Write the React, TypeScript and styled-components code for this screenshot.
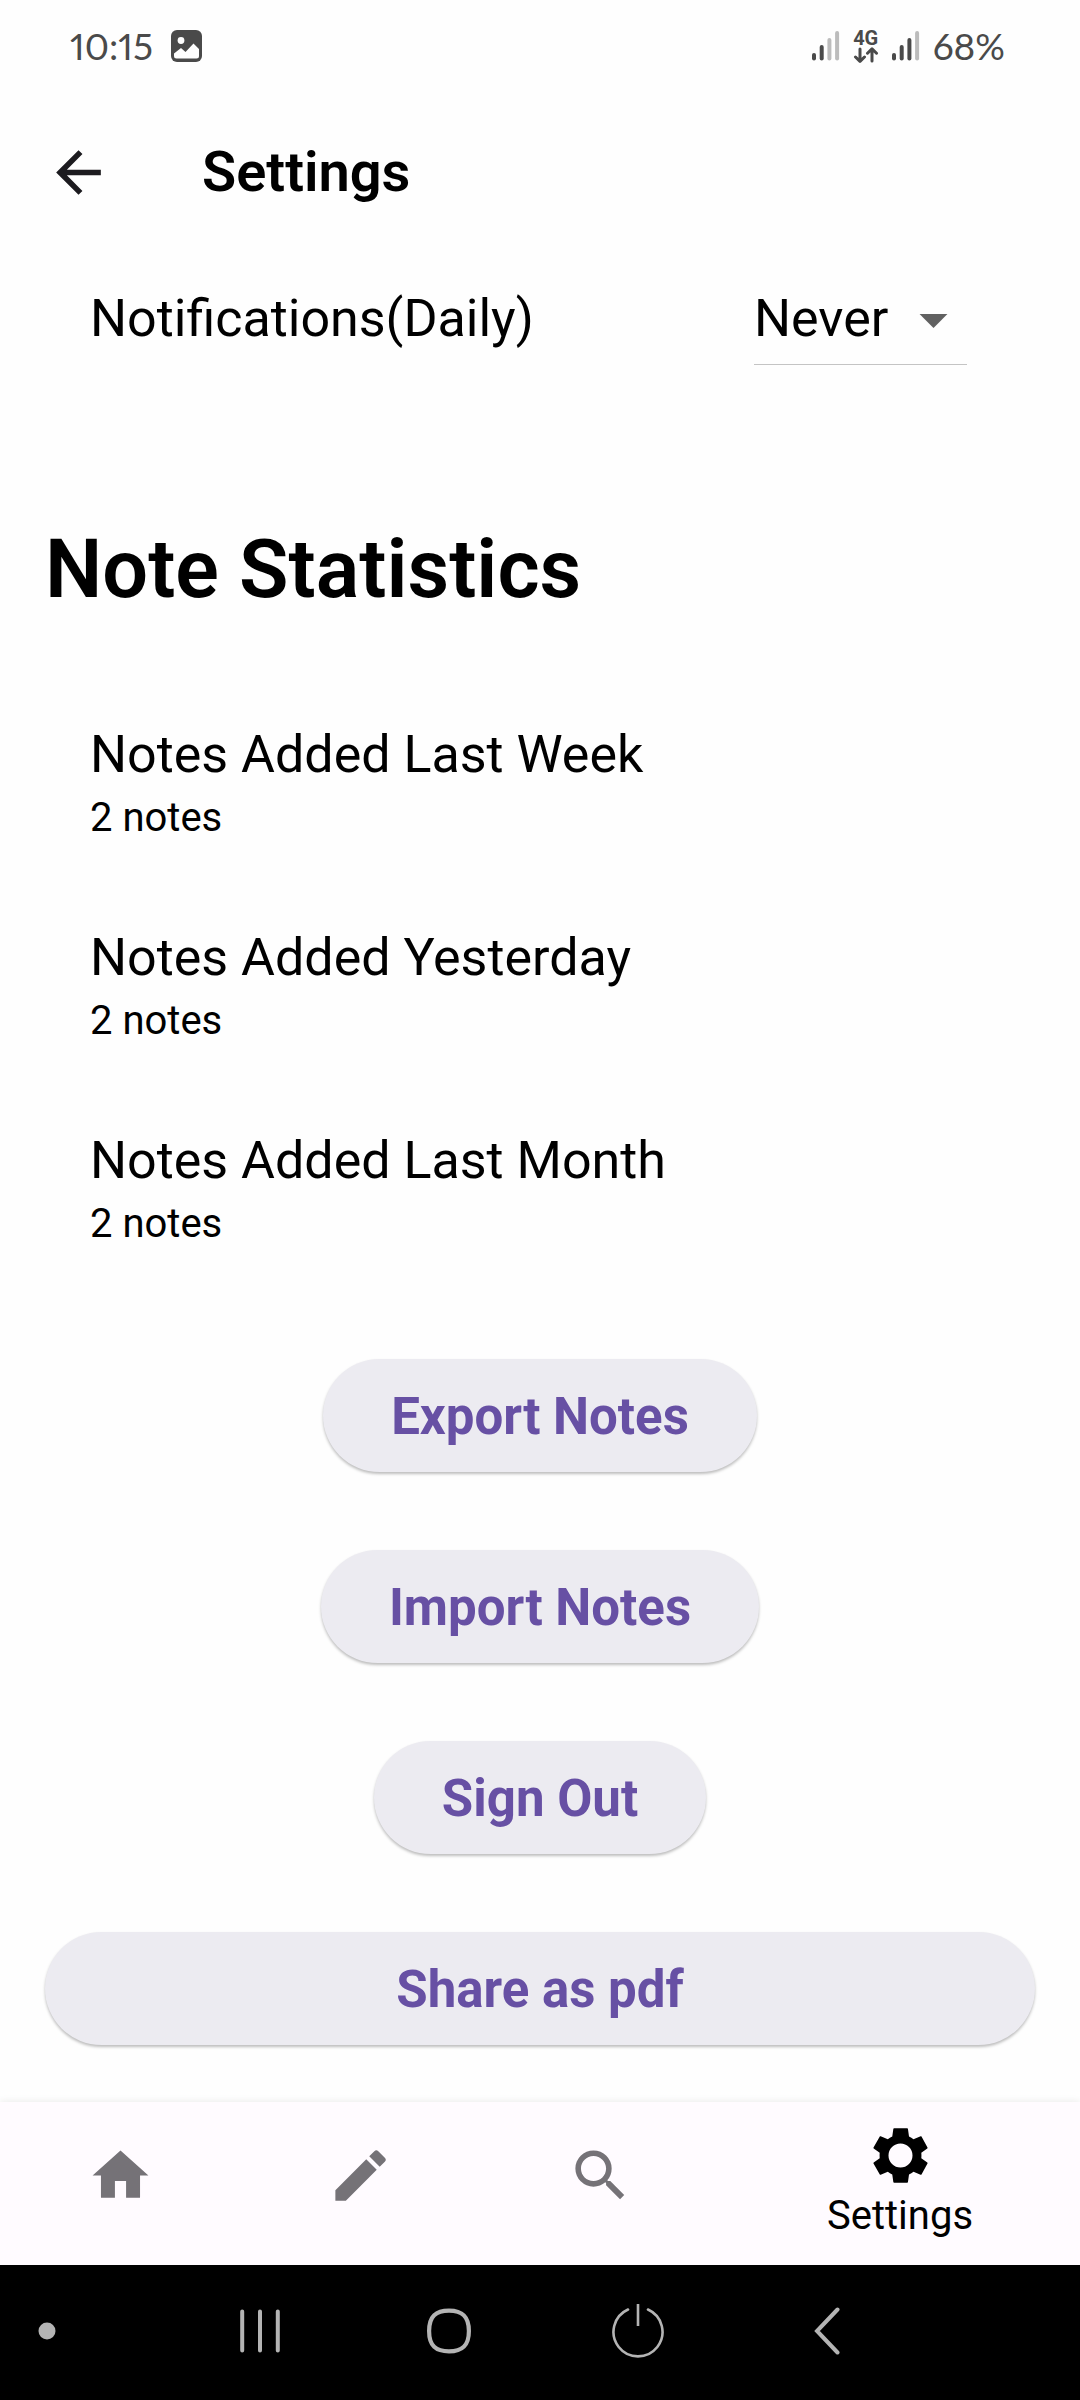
import React from "react";
import styled, { createGlobalStyle } from "styled-components";

const GlobalStyle = createGlobalStyle`
  *, *::before, *::after { box-sizing: border-box; }
  body {
    margin: 0;
    background: #fefefe;
    color: #000;
    font-family: Roboto, "Noto Sans", sans-serif;
  }
`;

const Screen = styled.div`
  min-height: 100vh;
  display: flex;
  flex-direction: column;
`;

const StatusBar = styled.div`
  height: 93px;
  padding: 0 75px 2px 70px;
  display: flex;
  align-items: center;
  justify-content: space-between;
  color: #4a4a4a;
  font-family: Lato, Roboto, sans-serif;
  font-size: 37px;
  font-variant-numeric: proportional-nums;
  line-height: 44px;
`;

const StatusGroup = styled.div<{ $gap: number }>`
  display: flex;
  align-items: center;
  gap: ${(p) => p.$gap}px;
`;

const Network = styled.div`
  display: flex;
  flex-direction: column;
  align-items: center;
  font-family: Roboto, sans-serif;
  font-size: 20px;
  font-weight: 700;
  line-height: 18px;
`;

const AppBar = styled.header`
  height: 158px;
  padding: 0 45px;
  display: flex;
  align-items: center;
  gap: 90px;
`;

const IconButton = styled.button`
  display: flex;
  padding: 0;
  border: 0;
  background: none;
  color: #1c1b1f;
`;

const Title = styled.h1`
  margin: 0;
  font-size: 56px;
  font-weight: 600;
  line-height: 66px;
`;

const Main = styled.main`
  flex: 1;
  padding: 0 45px 55px;
`;

const SettingRow = styled.div`
  height: 136px;
  padding: 0 68px 0 45px;
  display: flex;
  align-items: center;
  justify-content: space-between;
`;

const RowLabel = styled.label`
  font-size: 52px;
  line-height: 66px;
`;

const SelectBox = styled.div`
  position: relative;
  display: flex;
  border-bottom: 1px solid #c4c4c4;
`;

const Select = styled.select`
  appearance: none;
  height: 90px;
  padding: 0 78px 0 0;
  border: 0;
  background: none;
  color: #000;
  font-family: inherit;
  font-size: 52px;
  line-height: 66px;
`;

const SelectArrow = styled.svg`
  position: absolute;
  right: 0;
  top: 12px;
  color: #616161;
  pointer-events: none;
`;

const SectionTitle = styled.h2`
  margin: 136px 0 66px;
  font-size: 81px;
  font-weight: 600;
  line-height: 94px;
`;

const StatList = styled.dl`
  margin: 0;
`;

const Stat = styled.div`
  height: 203px;
  padding: 0 45px;
  display: flex;
  flex-direction: column;
  justify-content: center;
`;

const StatName = styled.dt`
  font-size: 52px;
  line-height: 66px;
`;

const StatValue = styled.dd`
  margin: 0;
  font-size: 40px;
  line-height: 60px;
`;

const Actions = styled.div`
  margin-top: 67px;
  display: flex;
  flex-direction: column;
  align-items: center;
  gap: 78px;
`;

const Action = styled.button<{ $wide?: boolean }>`
  height: 113px;
  padding: 2px 68px 0;
  align-self: ${(p) => (p.$wide ? "stretch" : "center")};
  border: 0;
  border-radius: 57px;
  background: #ecebf1;
  box-shadow: 0 2px 3px rgba(0, 0, 0, 0.26);
  color: #6750a4;
  font-family: inherit;
  font-size: 51px;
  font-weight: 700;
  line-height: 66px;
`;

const TabBar = styled.nav`
  height: 163px;
  display: flex;
  background: #fffbff;
  box-shadow: 0 -1px 7px rgba(0, 0, 0, 0.07);
`;

const Tab = styled.a<{ $active?: boolean }>`
  flex: ${(p) => (p.$active ? 3 : 2)} 1 0;
  padding-bottom: ${(p) => (p.$active ? 2 : 16)}px;
  display: flex;
  flex-direction: column;
  align-items: center;
  justify-content: center;
  color: ${(p) => (p.$active ? "#000" : "#757277")};
  font-size: 40px;
  line-height: 54px;
  text-decoration: none;
`;

const SystemBar = styled.div`
  height: 135px;
  display: grid;
  grid-template-columns: 165fr 189fr 189fr 189fr 189fr 159fr;
  align-items: center;
  background: #000;
`;

const SystemKey = styled.button<{ $edge?: boolean }>`
  height: 100%;
  padding: 0 0 4px ${(p) => (p.$edge ? 38 : 0)}px;
  display: flex;
  align-items: center;
  justify-content: ${(p) => (p.$edge ? "flex-start" : "center")};
  border: 0;
  background: none;
  color: #b4b4b4;
`;

const MaterialIcon = ({ d }: { d: string }) => (
  <svg width="67" height="67" viewBox="0 0 24 24" fill="currentColor" aria-hidden="true">
    <path d={d} />
  </svg>
);

const ICONS = {
  back: "M20 11H7.83l5.59-5.59L12 4l-8 8 8 8 1.41-1.41L7.83 13H20v-2z",
  home: "M10 20v-6h4v6h5v-8h3L12 3 2 12h3v8z",
  edit: "M3 17.25V21h3.75L17.81 9.94l-3.75-3.75L3 17.25zM20.71 7.04a.996.996 0 0 0 0-1.41l-2.34-2.34a.996.996 0 0 0-1.41 0l-1.83 1.83 3.75 3.75 1.83-1.83z",
  search:
    "M15.5 14h-.79l-.28-.27A6.471 6.471 0 0 0 16 9.5 6.5 6.5 0 1 0 9.5 16c1.61 0 3.09-.59 4.23-1.57l.27.28v.79l5 4.99L20.49 19l-4.99-5zm-6 0C7.01 14 5 11.99 5 9.5S7.01 5 9.5 5 14 7.01 14 9.5 11.99 14 9.5 14z",
  settings:
    "M19.45 12.95c.03-.31.05-.63.05-.95s-.02-.64-.05-.95l2.15-1.600c.1-.08.13-.22.07-.34l-2.150-3.900c-.06-.11-.2-.16-.32-.11l-2.550 1.050a7.600 7.600 0 0 0-1.600-.93l-.38-2.750A.27.27 0 0 0 14.400 2.250H9.700c-.14 0-.25.1-.27.23l-.38 2.750c-.58.24-1.110.55-1.600.93L4.900 5.110c-.12-.05-.26 0-.32.11L2.330 9.110c-.06.12-.03.26.07.34l2.150 1.600a8.500 8.500 0 0 0 0 1.900L2.400 14.550c-.1.08-.13.22-.07.34l2.250 3.900c.06.11.2.16.32.11l2.550-1.050c.49.38 1.020.69 1.600.93l.38 2.750c.02.13.13.23.27.23h4.700c.14 0 .25-.1.27-.23l.38-2.750c.58-.24 1.110-.55 1.600-.93l2.550 1.050c.12.05.26 0 .32-.11l2.150-3.900c.06-.12.03-.26-.07-.34zM12 16.300a4.300 4.300 0 1 1 0-8.600 4.300 4.300 0 0 1 0 8.600z",
};

const SIGNAL_TOPS = [22, 14, 7, 0];

const Signal = ({ level }: { level: number }) => (
  <svg width="28" height="30" viewBox="0 0 28 30" aria-hidden="true">
    {SIGNAL_TOPS.map((top, i) => (
      <rect
        key={top}
        x={i * 7.7}
        y={top}
        width="4"
        height={29.5 - top}
        rx="2"
        fill={i < level ? "#4a4a4a" : "#bcbcbc"}
      />
    ))}
  </svg>
);

const PictureIcon = () => (
  <svg width="31" height="32" viewBox="0 0 31 32" aria-hidden="true">
    <rect width="31" height="32" rx="6" fill="#4a4a4a" />
    <circle cx="10" cy="10.5" r="3.4" fill="#fefefe" />
    <path
      d="M3 23.500 10 18l4.500 4L22.500 13.500 28 19v7a2.500 2.500 0 0 1-2.500 2.500H5.500A2.500 2.500 0 0 1 3 26z"
      fill="#fefefe"
    />
  </svg>
);

const DataArrows = () => (
  <svg width="26" height="16" viewBox="0 0 26 16" fill="none" stroke="#4a4a4a" strokeWidth="3" strokeLinecap="round" strokeLinejoin="round" aria-hidden="true">
    <path d="M7 2v12M2.500 10 7 14.300 11.500 10M19 14V2M14.500 6.200 19 1.800 23.500 6.200" />
  </svg>
);

const stats = [
  { name: "Notes Added Last Week", value: "2 notes" },
  { name: "Notes Added Yesterday", value: "2 notes" },
  { name: "Notes Added Last Month", value: "2 notes" },
];

export default function App() {
  return (
    <Screen>
      <GlobalStyle />
      <StatusBar>
        <StatusGroup $gap={18}>
          <span>10:15</span>
          <PictureIcon />
        </StatusGroup>
        <StatusGroup $gap={13}>
          <Signal level={2} />
          <Network>
            <span>4G</span>
            <DataArrows />
          </Network>
          <Signal level={3} />
          <span>68%</span>
        </StatusGroup>
      </StatusBar>

      <AppBar>
        <IconButton type="button" aria-label="Back">
          <MaterialIcon d={ICONS.back} />
        </IconButton>
        <Title>Settings</Title>
      </AppBar>

      <Main>
        <SettingRow>
          <RowLabel htmlFor="notifications">Notifications(Daily)</RowLabel>
          <SelectBox>
            <Select id="notifications" defaultValue="never">
              <option value="never">Never</option>
            </Select>
            <SelectArrow width="67" height="67" viewBox="0 0 24 24" fill="currentColor" aria-hidden="true">
              <path d="M7 10l5 5 5-5z" />
            </SelectArrow>
          </SelectBox>
        </SettingRow>

        <SectionTitle>Note Statistics</SectionTitle>
        <StatList>
          {stats.map((s) => (
            <Stat key={s.name}>
              <StatName>{s.name}</StatName>
              <StatValue>{s.value}</StatValue>
            </Stat>
          ))}
        </StatList>

        <Actions>
          <Action type="button">Export Notes</Action>
          <Action type="button">Import Notes</Action>
          <Action type="button">Sign Out</Action>
          <Action type="button" $wide>
            Share as pdf
          </Action>
        </Actions>
      </Main>

      <TabBar>
        <Tab href="#home" aria-label="Home">
          <MaterialIcon d={ICONS.home} />
        </Tab>
        <Tab href="#edit" aria-label="Edit">
          <MaterialIcon d={ICONS.edit} />
        </Tab>
        <Tab href="#search" aria-label="Search">
          <MaterialIcon d={ICONS.search} />
        </Tab>
        <Tab href="#settings" $active>
          <MaterialIcon d={ICONS.settings} />
          Settings
        </Tab>
      </TabBar>

      <SystemBar>
        <SystemKey type="button" aria-label="Show or hide bar" $edge>
          <svg width="18" height="18" viewBox="0 0 18 18" fill="currentColor">
            <circle cx="9" cy="9" r="8.500" />
          </svg>
        </SystemKey>
        <SystemKey type="button" aria-label="Recent apps">
          <svg width="40" height="44" viewBox="0 0 40 44" stroke="currentColor" strokeWidth="4" strokeLinecap="round">
            <path d="M2.200 2.500v39M20 2.500v39M37.800 2.500v39" />
          </svg>
        </SystemKey>
        <SystemKey type="button" aria-label="Home screen">
          <svg width="44" height="46" viewBox="0 0 44 46" fill="none" stroke="currentColor" strokeWidth="4.200">
            <path d="M22 2.600C35 2.600 41.900 8 41.900 23S35 43.400 22 43.400 2.100 38 2.100 23 9 2.600 22 2.600z" />
          </svg>
        </SystemKey>
        <SystemKey type="button" aria-label="Power">
          <svg width="52" height="54" viewBox="0 0 52 54" fill="none" stroke="currentColor" strokeWidth="2.600">
            <path d="M16 5.500A24.500 24.500 0 1 0 36 5.500" strokeLinecap="round" />
            <path d="M26 0v22" />
          </svg>
        </SystemKey>
        <SystemKey type="button" aria-label="Go back">
          <svg width="26" height="48" viewBox="0 0 26 48" fill="none" stroke="currentColor" strokeWidth="4" strokeLinecap="round" strokeLinejoin="miter">
            <path d="M23.500 2.500 3 24l20.500 21.500" />
          </svg>
        </SystemKey>
        <span />
      </SystemBar>
    </Screen>
  );
}
